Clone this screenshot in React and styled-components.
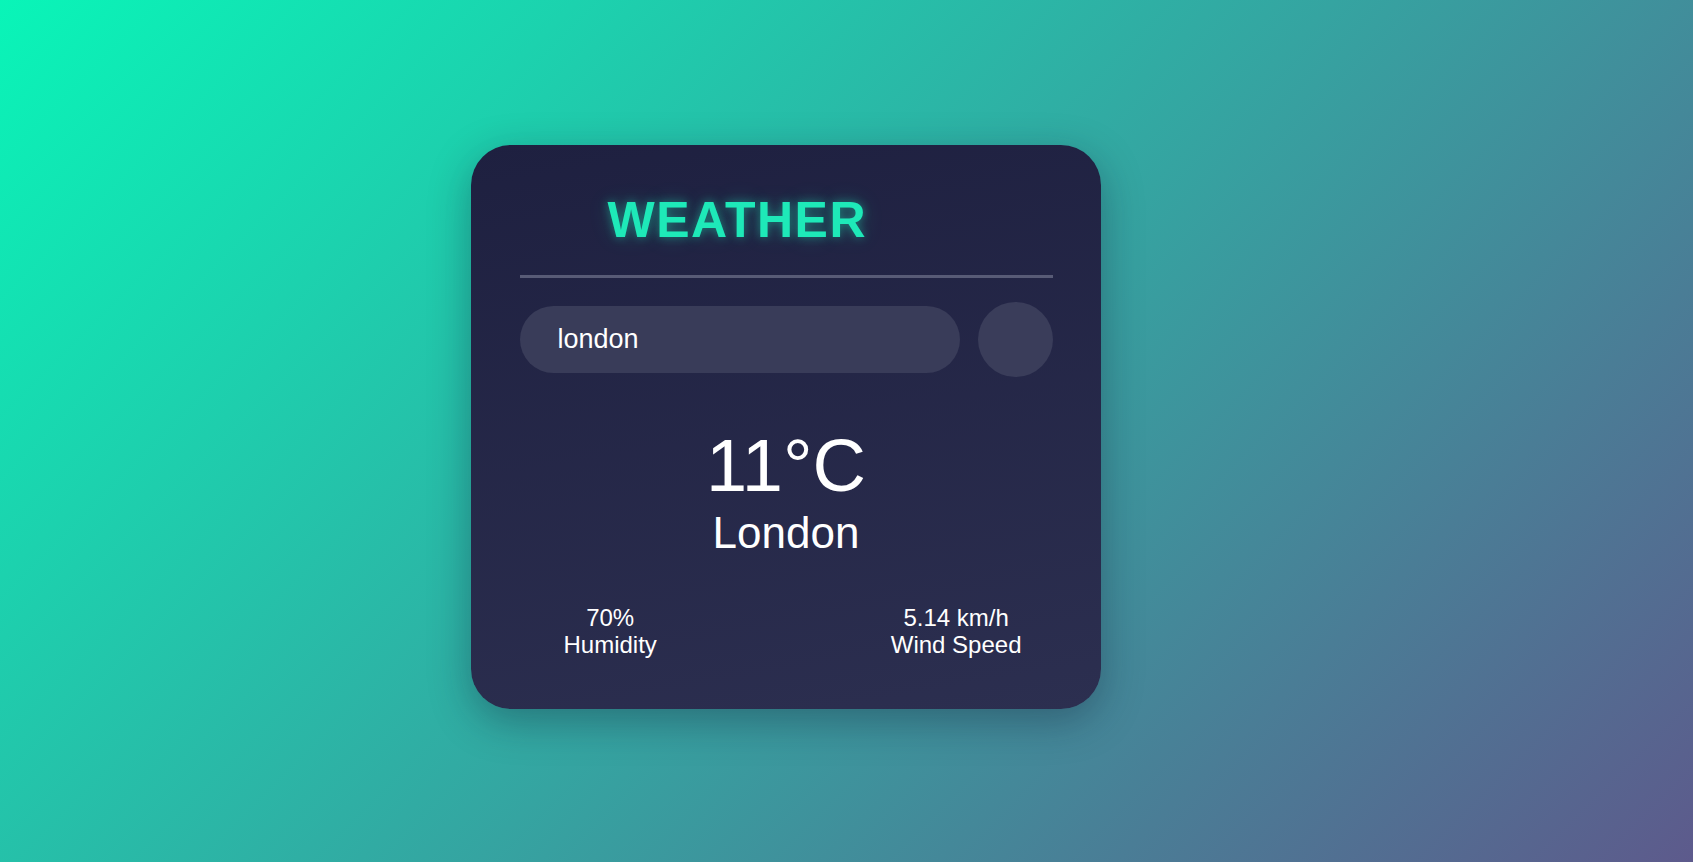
import React, { useState } from 'react'
import styled, { createGlobalStyle } from 'styled-components'

const GlobalStyle = createGlobalStyle`
	* {
		box-sizing: border-box;
	}
	body {
		margin: 0;
		font-family: 'Liberation Sans', Arial, sans-serif;
	}
`

const Page = styled.div`
	display: flex;
	justify-content: center;
	align-items: center;
	min-height: 100vh;
	padding: 0 122px 8px 0;
	background: linear-gradient(135deg, #09f5b8 0%, #5d5a8c 100%);
`

const Card = styled.div`
	display: flex;
	flex-direction: column;
	width: 630px;
	height: 564px;
	padding: 47px 48px 0 49px;
	border-radius: 40px;
	background: linear-gradient(170deg, #1e2040 0%, #2c2f50 100%);
	box-shadow: 0 12px 40px rgba(20, 20, 50, 0.35);
	color: #fff;
`

const Header = styled.div`
	display: flex;
	align-items: center;
	padding-left: 88px;
	padding-bottom: 26px;
	border-bottom: 3px solid #585b76;
`

const Title = styled.h1`
	margin: 0;
	font-size: 50px;
	font-weight: 700;
	letter-spacing: 1.5px;
	line-height: 57px;
	color: #1ee9b8;
	text-shadow: 0 0 10px rgba(30, 233, 184, 0.45), 0 0 22px rgba(30, 233, 184, 0.2);
`

const SearchRow = styled.div`
	display: flex;
	align-items: center;
	gap: 18px;
	margin-top: 24px;
`

const SearchInput = styled.input`
	flex: 1;
	height: 67px;
	padding: 0 38px;
	border: none;
	outline: none;
	border-radius: 34px;
	background: #393c59;
	color: #fff;
	font-family: 'Liberation Sans', Arial, sans-serif;
	font-size: 27px;
`

const SearchButton = styled.button`
	flex: none;
	width: 75px;
	height: 75px;
	border: none;
	border-radius: 50%;
	background: #3a3d5a;
	cursor: pointer;
`

const Current = styled.div`
	display: flex;
	flex-direction: column;
	align-items: center;
	margin-top: 46px;
`

const Temp = styled.div`
	font-size: 74px;
	line-height: 85px;
`

const City = styled.div`
	font-size: 44px;
	line-height: 50px;
`

const Stats = styled.div`
	display: flex;
	justify-content: space-between;
	margin-top: 46px;
	padding: 0 31px 0 44px;
`

const Stat = styled.div`
	display: flex;
	flex-direction: column;
	align-items: center;
	text-align: center;
	font-size: 24px;
	line-height: 27px;
`

const stats = [
	{ value: '70%', label: 'Humidity' },
	{ value: '5.14 km/h', label: 'Wind Speed' },
]

const App = () => {
	const [query, setQuery] = useState('london')

	return (
		<>
			<GlobalStyle />
			<Page>
				<Card>
					<Header>
						<Title>WEATHER</Title>
					</Header>
					<SearchRow>
						<SearchInput value={query} onChange={(e) => setQuery(e.target.value)} />
						<SearchButton aria-label='Search' />
					</SearchRow>
					<Current>
						<Temp>11°C</Temp>
						<City>London</City>
					</Current>
					<Stats>
						{stats.map((s) => (
							<Stat key={s.label}>
								<span>{s.value}</span>
								<span>{s.label}</span>
							</Stat>
						))}
					</Stats>
				</Card>
			</Page>
		</>
	)
}

export default App
